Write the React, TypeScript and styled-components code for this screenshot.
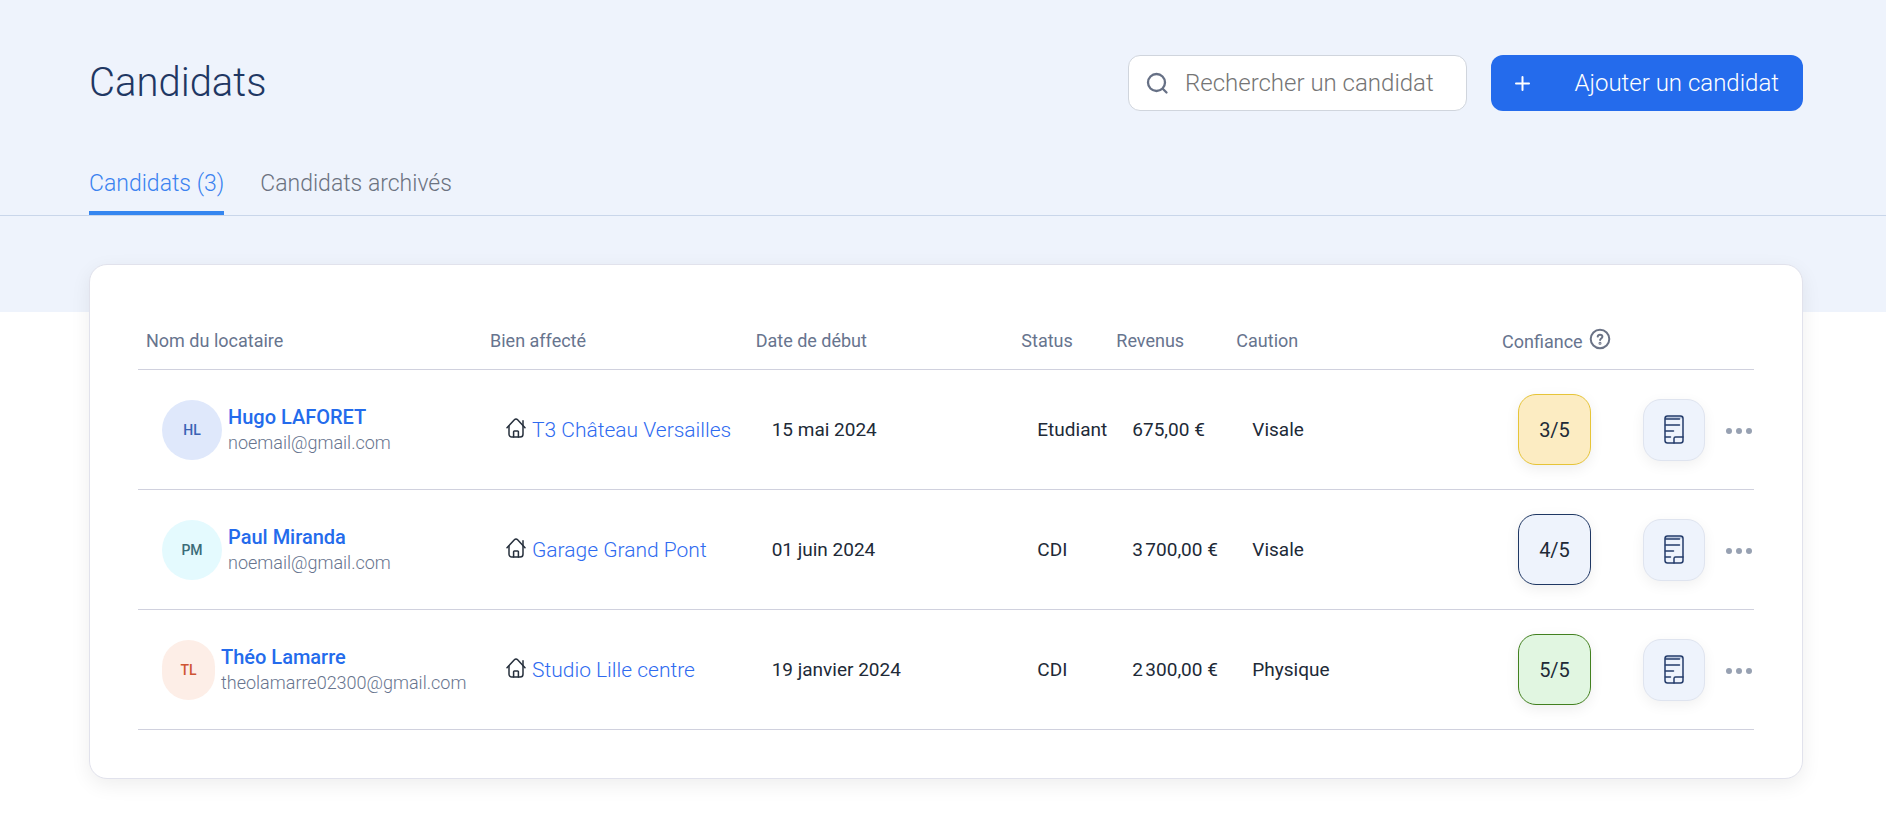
import React from "react";
import styled, { createGlobalStyle } from "styled-components";

const GlobalStyle = createGlobalStyle`
  *, *::before, *::after { box-sizing: border-box; }
  body {
    margin: 0;
    background: #ffffff;
    color: #212a37;
    font-family: Roboto, "Liberation Sans", sans-serif;
    font-size: 18px;
    line-height: 24px;
  }
  a { color: inherit; text-decoration: none; }
  button { font: inherit; border: 0; cursor: pointer; }
`;

const Banner = styled.header`
  height: 312px;
  padding-top: 55px;
  background: #eef3fc;
`;

const TopBar = styled.div`
  display: flex;
  align-items: center;
  gap: 24px;
  height: 56px;
  padding: 0 83px 0 89px;
`;

const Title = styled.h1`
  flex: 1;
  margin: 0;
  color: #1f3763;
  font-size: 40px;
  font-weight: 300;
  line-height: 56px;
`;

const SearchBox = styled.label`
  display: flex;
  align-items: center;
  gap: 16px;
  width: 339px;
  height: 56px;
  padding: 0 16px;
  border: 1px solid #d0d5dd;
  border-radius: 12px;
  background: #ffffff;
`;

const SearchInput = styled.input`
  flex: 1;
  min-width: 0;
  padding: 0;
  border: 0;
  outline: 0;
  background: transparent;
  color: #212a37;
  font: inherit;
  font-size: 24px;
  font-weight: 300;
  line-height: 32px;
  &::placeholder { color: #757575; opacity: 1; }
`;

const AddButton = styled.button`
  display: flex;
  align-items: center;
  justify-content: space-between;
  width: 312px;
  height: 56px;
  padding: 0 24px;
  border-radius: 12px;
  background: #246bec;
  color: #ffffff;
  font-size: 24px;
  font-weight: 300;
`;

const Tabs = styled.nav`
  display: flex;
  gap: 36px;
  margin-top: 48px;
  padding-left: 89px;
  border-bottom: 1px solid #c9d6ea;
`;

const Tab = styled.a<{ $active?: boolean }>`
  height: 56px;
  border-bottom: 4px solid ${(p) => (p.$active ? "#3586f0" : "transparent")};
  color: ${(p) => (p.$active ? "#3b82f0" : "#6b7280")};
  font-size: 23px;
  font-weight: 300;
  line-height: 50px;
  white-space: nowrap;
`;

const Card = styled.main`
  margin: -48px 83px 48px 89px;
  padding: 48px;
  border: 1px solid #e1e2ec;
  border-radius: 18px;
  background: #ffffff;
  box-shadow: 0 6px 20px rgba(0, 0, 0, 0.07);
`;

const Table = styled.table`
  width: 100%;
  table-layout: fixed;
  border-collapse: separate;
  border-spacing: 0;
`;

const HeadCell = styled.th<{ $width?: number }>`
  width: ${(p) => (p.$width ? `${p.$width}px` : "auto")};
  height: 57px;
  padding: 0 0 0 8px;
  border-bottom: 1px solid #d0d1de;
  color: #67748e;
  font-weight: 400;
  text-align: left;
  white-space: nowrap;
`;

const Cell = styled.td`
  height: 120px;
  padding: 0 0 0 24px;
  border-bottom: 1px solid #d0d1de;
  font-size: 19px;
  white-space: nowrap;
`;

const HeadLabel = styled.span`
  display: flex;
  align-items: flex-end;
  gap: 6px;
  svg { margin-bottom: 4px; }
`;

const Person = styled.div`
  display: flex;
  align-items: center;
  gap: 6px;
`;

const Avatar = styled.span<{ $bg: string; $fg: string; $width: number }>`
  display: flex;
  flex: none;
  align-items: center;
  justify-content: center;
  width: ${(p) => p.$width}px;
  height: 60px;
  border-radius: 30px;
  background: ${(p) => p.$bg};
  color: ${(p) => p.$fg};
  font-size: 14px;
  font-weight: 500;
`;

const Identity = styled.div`
  display: flex;
  flex-direction: column;
  line-height: 26px;
`;

const Name = styled.a`
  color: #246bec;
  font-size: 20px;
  font-weight: 500;
`;

const Email = styled.span`
  color: #67748e;
  font-size: 18px;
  font-weight: 300;
`;

const Property = styled.a`
  display: flex;
  align-items: center;
  gap: 6px;
  color: #2f6bf0;
  font-size: 21px;
  font-weight: 300;
  svg { margin-bottom: 4px; }
`;

const Score = styled.span<{ $bg: string; $border: string }>`
  display: flex;
  align-items: center;
  justify-content: center;
  width: 73px;
  height: 71px;
  border: 1px solid ${(p) => p.$border};
  border-radius: 18px;
  background: ${(p) => p.$bg};
  box-shadow: 0 4px 14px rgba(0, 0, 0, 0.07);
  font-size: 20px;
`;

const Actions = styled.div`
  display: flex;
  align-items: center;
  gap: 20px;
`;

const FileButton = styled.button`
  display: flex;
  flex: none;
  align-items: center;
  justify-content: center;
  width: 62px;
  height: 62px;
  padding: 0;
  border: 1px solid #dfe4ef;
  border-radius: 18px;
  background: #eef3fc;
  box-shadow: 0 4px 14px rgba(0, 0, 0, 0.06);
`;

const MoreButton = styled.button`
  display: flex;
  padding: 0;
  background: transparent;
`;

const SearchIcon = () => (
  <svg width="24" height="24" viewBox="0 0 24 24" fill="none" stroke="#667085" strokeWidth="2.3" strokeLinecap="round" aria-hidden="true">
    <circle cx="11.5" cy="11.5" r="8.5" />
    <path d="M18 18l3.500 3.500" />
  </svg>
);

const PlusIcon = () => (
  <svg width="15" height="15" viewBox="0 0 15 15" stroke="#ffffff" strokeWidth="2" strokeLinecap="round" aria-hidden="true">
    <path d="M7.5 1v13M1 7.5h13" />
  </svg>
);

const HelpIcon = () => (
  <svg width="22" height="22" viewBox="0 0 22 22" fill="none" stroke="#6b7386" strokeWidth="2" strokeLinecap="round" aria-hidden="true">
    <circle cx="11" cy="11" r="9.3" />
    <path d="M8.7 8.6c.2-1.2 1.100-1.900 2.300-1.900 1.400 0 2.400.8 2.400 2 0 1.700-2.300 1.800-2.300 3.300" />
    <circle cx="11" cy="15.200" r=".5" />
  </svg>
);

const HomeIcon = () => (
  <svg width="20" height="20" viewBox="0 0 20 20" fill="none" stroke="#27303d" strokeWidth="1.500" strokeLinecap="round" strokeLinejoin="round" aria-hidden="true">
    <path d="M1 9.800L8.400 1.700a2.200 2.200 0 0 1 3.200 0L19 9.800" />
    <path d="M3 8v8.200A2.800 2.800 0 0 0 5.800 19h8.400a2.800 2.800 0 0 0 2.800-2.800V2.800" />
    <path d="M7.600 19v-5.200a.8.800 0 0 1 .8-.8h3.200a.8.800 0 0 1 .8.800V19" />
  </svg>
);

const FileIcon = () => (
  <svg width="20" height="29" viewBox="0 0 20 29" fill="none" stroke="#243c6b" strokeWidth="1.500" strokeLinecap="round" strokeLinejoin="round" aria-hidden="true">
    <path d="M2 1.500h16v2H2z" fill="#b9c5dc" stroke="none" />
    <rect x="1" y="1" width="18" height="27" rx="2.500" />
    <path d="M1.500 4H15.500M1.500 10H15.500M1.500 16H9.500M1.500 22H6.500" />
    <path d="M10 28v-4.500A1.500 1.500 0 0 1 11.500 22H19" />
  </svg>
);

const DotsIcon = () => (
  <svg width="28" height="10" viewBox="0 0 28 10" fill="#97a1b2" aria-hidden="true">
    <circle cx="4" cy="6" r="3" />
    <circle cx="14" cy="6" r="3" />
    <circle cx="24" cy="6" r="3" />
  </svg>
);

const candidates = [
  {
    initials: "HL", avatarBg: "#dfe8fb", avatarFg: "#3a62b4", avatarWidth: 60,
    name: "Hugo LAFORET", email: "noemail@gmail.com", property: "T3 Château Versailles",
    start: "15 mai 2024", status: "Etudiant", income: "675,00 €", guarantor: "Visale",
    score: "3/5", scoreBg: "#fcecc2", scoreBorder: "#e6c437",
  },
  {
    initials: "PM", avatarBg: "#e4fafe", avatarFg: "#3b6c78", avatarWidth: 60,
    name: "Paul Miranda", email: "noemail@gmail.com", property: "Garage Grand Pont",
    start: "01 juin 2024", status: "CDI", income: "3\u202f700,00 €", guarantor: "Visale",
    score: "4/5", scoreBg: "#eef3fc", scoreBorder: "#1f3763",
  },
  {
    initials: "TL", avatarBg: "#fdeee7", avatarFg: "#cf5433", avatarWidth: 53,
    name: "Théo Lamarre", email: "theolamarre02300@gmail.com", property: "Studio Lille centre",
    start: "19 janvier 2024", status: "CDI", income: "2\u202f300,00 €", guarantor: "Physique",
    score: "5/5", scoreBg: "#e1f6e1", scoreBorder: "#42801f",
  },
];

export default function App() {
  return (
    <>
      <GlobalStyle />
      <Banner>
        <TopBar>
          <Title>Candidats</Title>
          <SearchBox>
            <SearchIcon />
            <SearchInput type="text" placeholder="Rechercher un candidat" aria-label="Rechercher un candidat" />
          </SearchBox>
          <AddButton type="button">
            <PlusIcon />
            Ajouter un candidat
          </AddButton>
        </TopBar>
        <Tabs>
          <Tab href="#candidats" $active>Candidats (3)</Tab>
          <Tab href="#archives">Candidats archivés</Tab>
        </Tabs>
      </Banner>
      <Card>
        <Table>
          <thead>
            <tr>
              <HeadCell $width={344}>Nom du locataire</HeadCell>
              <HeadCell>Bien affecté</HeadCell>
              <HeadCell>Date de début</HeadCell>
              <HeadCell $width={95}>Status</HeadCell>
              <HeadCell $width={120}>Revenus</HeadCell>
              <HeadCell>Caution</HeadCell>
              <HeadCell $width={125}>
                <HeadLabel>Confiance <HelpIcon /></HeadLabel>
              </HeadCell>
              <HeadCell $width={135} aria-label="Actions" />
            </tr>
          </thead>
          <tbody>
            {candidates.map((c) => (
              <tr key={c.name}>
                <Cell>
                  <Person>
                    <Avatar $bg={c.avatarBg} $fg={c.avatarFg} $width={c.avatarWidth}>{c.initials}</Avatar>
                    <Identity>
                      <Name href="#candidat">{c.name}</Name>
                      <Email>{c.email}</Email>
                    </Identity>
                  </Person>
                </Cell>
                <Cell>
                  <Property href="#bien"><HomeIcon />{c.property}</Property>
                </Cell>
                <Cell>{c.start}</Cell>
                <Cell>{c.status}</Cell>
                <Cell>{c.income}</Cell>
                <Cell>{c.guarantor}</Cell>
                <Cell>
                  <Score $bg={c.scoreBg} $border={c.scoreBorder}>{c.score}</Score>
                </Cell>
                <Cell>
                  <Actions>
                    <FileButton type="button" aria-label="Dossier"><FileIcon /></FileButton>
                    <MoreButton type="button" aria-label="Plus d'options"><DotsIcon /></MoreButton>
                  </Actions>
                </Cell>
              </tr>
            ))}
          </tbody>
        </Table>
      </Card>
    </>
  );
}
